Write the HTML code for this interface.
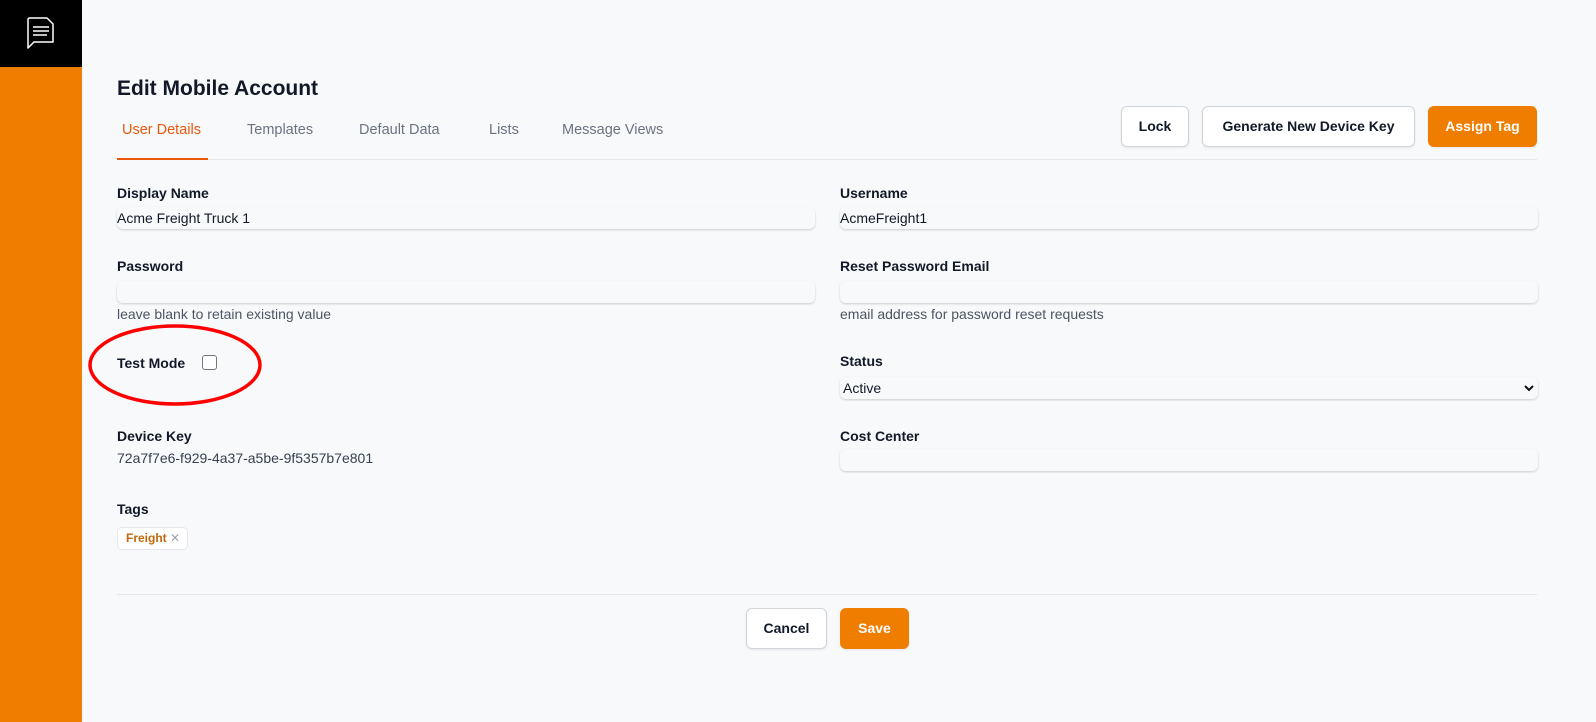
<!DOCTYPE html>
<html><head><meta charset="utf-8"><style>
*{box-sizing:border-box;margin:0;padding:0}
body{width:1596px;height:722px;background:#f8f9fb;font-family:"Liberation Sans",sans-serif;position:relative;overflow:hidden;color:#111827}
.a{position:absolute}
.side{left:0;top:0;width:82px;height:722px;background:#ef7d00}
.logo{left:0;top:0;width:82px;height:67px;background:#000}
.lbl{font-size:14px;font-weight:bold;color:#111827}
.inp{height:22px;background:#f8f9fb;border-radius:6px;box-shadow:0 1px 2px rgba(0,0,0,.18);font-size:14px;line-height:22px;color:#111827}
.hint{font-size:14px;color:#4b5563}
.tab{font-size:14.5px;top:122px;color:#6b7280}
.btn{height:41px;border:1px solid #d1d5db;border-radius:6px;background:#fff;font-size:14px;font-weight:bold;text-align:center;line-height:39px;box-shadow:0 1px 2px rgba(0,0,0,.08)}
.or{background:#ef7d00;color:#fff;border-color:#ef7d00}
</style></head><body>
<div class="a side"></div>
<div class="a logo"><svg width="82" height="67" viewBox="0 0 82 67"><path d="M29 18h18l6 6v18H34l-6 6V20a2 2 0 0 1 1-2z" fill="none" stroke="#fff" stroke-width="1.5" stroke-linejoin="round"/><path d="M33 27h16M33 31h16M33 35h14" stroke="#fff" stroke-width="1.6"/></svg></div>
<div class="a" style="left:117px;top:77px;font-size:21px;font-weight:bold;color:#111827">Edit Mobile Account</div>
<div class="a tab" style="left:122px;color:#ea580c">User Details</div>
<div class="a tab" style="left:247px">Templates</div>
<div class="a tab" style="left:359px">Default Data</div>
<div class="a tab" style="left:489px">Lists</div>
<div class="a tab" style="left:562px">Message Views</div>
<div class="a" style="left:117px;top:158px;width:91px;height:2px;background:#ea580c"></div>
<div class="a" style="left:208px;top:159px;width:1329px;height:1px;background:#e5e7eb"></div>
<div class="a btn" style="left:1121px;top:106px;width:68px">Lock</div>
<div class="a btn" style="left:1202px;top:106px;width:213px">Generate New Device Key</div>
<div class="a btn or" style="left:1428px;top:106px;width:109px">Assign Tag</div>

<div class="a lbl" style="left:117px;top:185px">Display Name</div>
<div class="a inp" style="left:117px;top:207px;width:698px">Acme Freight Truck 1</div>
<div class="a lbl" style="left:840px;top:185px">Username</div>
<div class="a inp" style="left:840px;top:207px;width:698px">AcmeFreight1</div>

<div class="a lbl" style="left:117px;top:258px">Password</div>
<div class="a inp" style="left:117px;top:281px;width:698px"></div>
<div class="a hint" style="left:117px;top:306px">leave blank to retain existing value</div>
<div class="a lbl" style="left:840px;top:258px">Reset Password Email</div>
<div class="a inp" style="left:840px;top:281px;width:698px"></div>
<div class="a hint" style="left:840px;top:306px">email address for password reset requests</div>

<div class="a lbl" style="left:117px;top:355px">Test Mode</div>
<div class="a" style="left:202px;top:355px;width:15px;height:15px;border:1.5px solid #767676;border-radius:3px;background:#fff"></div>
<svg class="a" style="left:80px;top:315px" width="190" height="100"><ellipse cx="95" cy="50" rx="85" ry="39" fill="none" stroke="#f00" stroke-width="3.5"/></svg>

<div class="a lbl" style="left:840px;top:353px">Status</div>
<div class="a inp" style="left:840px;top:377px;width:698px;padding-left:3px">Active<svg class="a" style="right:4px;top:7px" width="10" height="8"><path d="M1 2l4 4 4-4" fill="none" stroke="#111" stroke-width="2"/></svg></div>

<div class="a lbl" style="left:117px;top:428px">Device Key</div>
<div class="a" style="left:117px;top:450px;font-size:14px;color:#374151">72a7f7e6-f929-4a37-a5be-9f5357b7e801</div>
<div class="a lbl" style="left:840px;top:428px">Cost Center</div>
<div class="a inp" style="left:840px;top:449px;width:698px"></div>

<div class="a lbl" style="left:117px;top:501px">Tags</div>
<div class="a" style="left:117px;top:527px;width:71px;height:23px;border:1px solid #e5e7eb;border-radius:5px;background:#fff;font-size:12px;font-weight:bold;color:#c2670a;line-height:21px;padding-left:8px">Freight <span style="color:#9ca3af;font-weight:normal">✕</span></div>

<div class="a" style="left:117px;top:594px;width:1420px;height:1px;background:#e5e7eb"></div>
<div class="a btn" style="left:746px;top:608px;width:81px">Cancel</div>
<div class="a btn or" style="left:840px;top:608px;width:69px">Save</div>
</body></html>
